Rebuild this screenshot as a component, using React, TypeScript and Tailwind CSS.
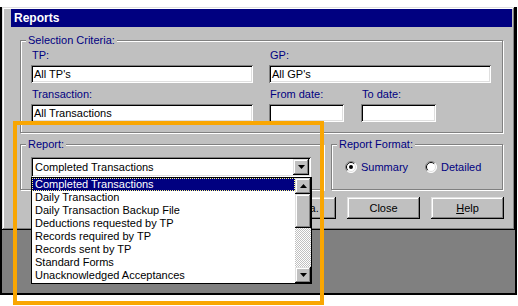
import React from 'react';

const raised = 'shadow-[inset_-1px_-1px_0_#000,inset_1px_1px_0_#dfdfdf,inset_-2px_-2px_0_#808080,inset_2px_2px_0_#fff]';
const sunken = 'shadow-[inset_1px_1px_0_#808080,inset_-1px_-1px_0_#fff,inset_2px_2px_0_#000,inset_-2px_-2px_0_#dfdfdf]';

function Group({ label, className, children }: { label: string; className: string; children: React.ReactNode }) {
  return (
    <fieldset className={'border border-[#808080] shadow-[inset_1px_1px_0_#fff,1px_1px_0_#fff] ' + className}>
      <legend className="ml-[5px] px-[2px] bg-[#c0c0c0] text-[#000080] leading-[13px]">{label}</legend>
      {children}
    </fieldset>
  );
}

function Field({ label, width, value }: { label: string; width: string; value?: string }) {
  return (
    <div>
      <div className="h-[13px] pl-[1px] text-[#000080]">{label}</div>
      <div className={'mt-[3px] h-[18px] bg-white pl-[3px] pt-[3px] text-black ' + width + ' ' + sunken}>{value}</div>
    </div>
  );
}

function Arrow({ up }: { up?: boolean }) {
  return (
    <svg width="7" height="4" viewBox="0 0 7 4">
      <polygon points={up ? '3.5,0 7,4 0,4' : '0,0 7,0 3.5,4'} fill="#000" />
    </svg>
  );
}

function Radio({ checked }: { checked?: boolean }) {
  return (
    <svg width="12" height="12" viewBox="0 0 12 12">
      <circle cx="6" cy="6" r="5.5" fill="#fff" />
      <path d="M2.1 9.9 A5.5 5.5 0 0 1 9.9 2.1" stroke="#808080" fill="none" />
      <path d="M9.9 2.1 A5.5 5.5 0 0 1 2.1 9.9" stroke="#fff" fill="none" />
      <path d="M2.8 9.2 A4.5 4.5 0 0 1 9.2 2.8" stroke="#000" fill="none" />
      <path d="M9.2 2.8 A4.5 4.5 0 0 1 2.8 9.2" stroke="#dfdfdf" fill="none" />
      {checked && <circle cx="6" cy="6" r="2" fill="#000" />}
    </svg>
  );
}

const items = [
  'Completed Transactions',
  'Daily Transaction',
  'Daily Transaction Backup File',
  'Deductions requested by TP',
  'Records required by TP',
  'Records sent by TP',
  'Standard Forms',
  'Unacknowledged Acceptances',
];

export default function App() {
  return (
    <div className="relative w-[518px] h-[306px] bg-white overflow-hidden font-['Liberation_Sans',Arial,sans-serif] text-[11px] leading-[13px] text-black">
      <div className="w-[517px] h-[288px] bg-[#808080] border-x-2 border-b-2 border-black">
        {/* dialog */}
        <div className={'mt-[7px] w-[513px] h-[223px] bg-[#c0c0c0] pl-[9px] pr-[3px] pt-[2px] ' + raised}>
          <div className="h-[18px] bg-[#000080] pl-[3px] flex items-center text-white font-bold text-[12px]">Reports</div>

          <Group label="Selection Criteria:" className="ml-[9px] mt-[7px] w-[483px]">
            <div className="pl-[10px] pt-[2px] pb-[10px] flex gap-[16px]">
              <div>
                <Field label="TP:" width="w-[222px]" value="All TP's" />
                <div className="mt-[5px]">
                  <Field label="Transaction:" width="w-[222px]" value="All Transactions" />
                </div>
              </div>
              <div>
                <Field label="GP:" width="w-[222px]" value="All GP's" />
                <div className="mt-[5px] flex gap-[17px]">
                  <Field label="From date:" width="w-[75px]" />
                  <Field label="To date:" width="w-[75px]" />
                </div>
              </div>
            </div>
          </Group>

          <div className="ml-[9px] mt-[5px] flex">
            <Group label="Report:" className="w-[304px]">
              <div className="pl-[10px] pt-[6px] pb-[12px]">
                <div className={'relative h-[20px] w-[280px] bg-white pl-[4px] pt-[4px] ' + sunken}>
                  Completed Transactions
                  <div className={'absolute right-[2px] top-[2px] w-[16px] h-[16px] bg-[#c0c0c0] flex items-center justify-center ' + raised}>
                    <Arrow />
                  </div>
                </div>
              </div>
            </Group>
            <Group label="Report Format:" className="ml-[7px] w-[172px]">
              <div className="pl-[13px] pt-[6px] h-[26px] flex items-center text-[#000080]">
                <div className="w-[80px] flex items-center gap-[4px]">
                  <Radio checked />
                  <span>Summary</span>
                </div>
                <div className="flex items-center gap-[4px]">
                  <Radio />
                  <span>Detailed</span>
                </div>
              </div>
            </Group>
          </div>

          <div className="ml-[252px] mt-[7px] flex gap-[11px]">
            <button className={'w-[73px] h-[22px] bg-[#c0c0c0] ' + raised}>Criteria.</button>
            <button className={'w-[73px] h-[22px] bg-[#c0c0c0] ' + raised}>Close</button>
            <button className={'w-[73px] h-[22px] bg-[#c0c0c0] ' + raised}>
              <span className="underline">H</span>elp
            </button>
          </div>
        </div>
      </div>

      {/* open dropdown list */}
      <div className="absolute left-[31px] top-[177px] w-[281px] h-[107px] border border-black bg-white flex">
        <div className="flex-1">
          {items.map((it, i) => (
            <div
              key={it}
              className={
                'h-[13px] pl-[3px] whitespace-nowrap ' +
                (i === 0 ? 'bg-[#000080] text-white outline-1 outline-dotted outline-[#ffff80] -outline-offset-1' : '')
              }
            >
              {it}
            </div>
          ))}
        </div>
        <div className="w-[16px] flex flex-col">
          <div className={'h-[16px] bg-[#c0c0c0] flex items-center justify-center ' + raised}>
            <Arrow up />
          </div>
          <div className={'h-[34px] bg-[#c0c0c0] ' + raised} />
          <div className="flex-1 bg-[repeating-conic-gradient(#c0c0c0_0_25%,#fff_0_50%)] bg-[length:2px_2px]" />
          <div className={'h-[16px] bg-[#c0c0c0] flex items-center justify-center ' + raised}>
            <Arrow />
          </div>
        </div>
      </div>

      {/* annotation */}
      <div className="absolute left-[13px] top-[121px] w-[311px] h-[184px] border-4 border-[#f9a602]" />
    </div>
  );
}
